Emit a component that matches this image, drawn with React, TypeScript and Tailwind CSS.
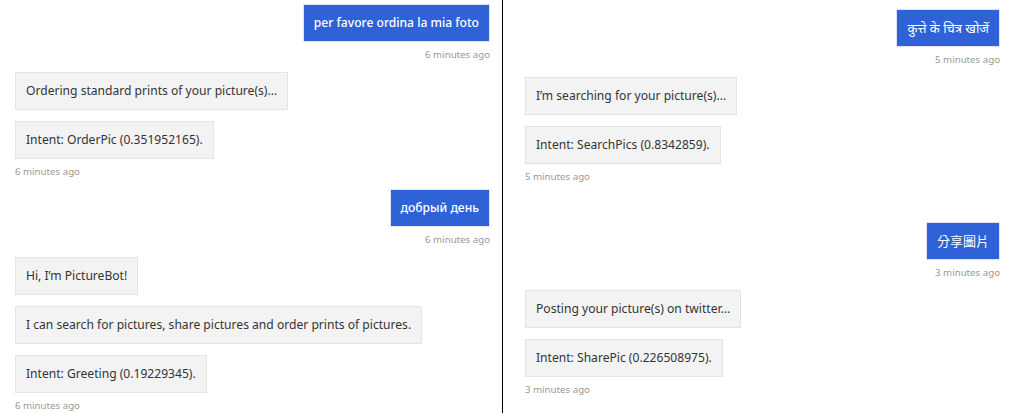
type Msg = { from: "user" | "bot"; lines: string[]; time: string; script?: "latin" | "other" };

const leftChat: Msg[] = [
    { from: "user", lines: ["per favore ordina la mia foto"], time: "6 minutes ago" },
    { from: "bot", lines: ["Ordering standard prints of your picture(s)...", "Intent: OrderPic (0.351952165)."], time: "6 minutes ago" },
    { from: "user", lines: ["добрый день"], time: "6 minutes ago" },
    {
        from: "bot",
        lines: [
            "Hi, I\u2019m PictureBot!",
            "I can search for pictures, share pictures and order prints of pictures.",
            "Intent: Greeting (0.19229345).",
        ],
        time: "6 minutes ago",
    },
];

const rightChat: Msg[] = [
    { from: "user", lines: ["कुत्ते के चित्र खोजें"], time: "5 minutes ago", script: "other" },
    { from: "bot", lines: ["I\u2019m searching for your picture(s)...", "Intent: SearchPics (0.8342859)."], time: "5 minutes ago" },
    { from: "user", lines: ["分享圖片"], time: "3 minutes ago", script: "other" },
    { from: "bot", lines: ["Posting your picture(s) on twitter...", "Intent: SharePic (0.226508975)."], time: "3 minutes ago" },
];

function Group({ msg, className = "" }: { msg: Msg; className?: string }) {
    const isUser = msg.from === "user";
    // non-latin user text falls back to a regular-weight font in the original
    const userText = msg.script === "other" ? "font-normal text-[13px]" : "font-medium";
    return (
        <div className={`flex flex-col ${isUser ? "items-end" : "items-start"} ${className}`}>
            {msg.lines.map((line, i) => (
                <div
                    key={i}
                    className={`h-[38px] px-[10px] border flex items-center whitespace-nowrap leading-5 ${i > 0 ? "mt-[11px]" : ""} ${
                        isUser
                            ? `bg-[#2f62d6] border-[#dce4f5] text-white ${userText}`
                            : "bg-[#f3f3f3] border-[#e4e4e4] text-[#333333]"
                    }`}
                >
                    {line}
                </div>
            ))}
            <div className="mt-[6px] h-[14px] leading-[14px] text-[9.7px] text-[#999999]">{msg.time}</div>
        </div>
    );
}

export default function App() {
    return (
        <div
            className="flex h-[413px] w-[1023px] overflow-hidden bg-white text-[12.1px]"
            style={{ fontFamily: '"Noto Sans", "Noto Sans CJK TC", sans-serif' }}
        >
            <div className="w-[502px] pl-[15px] pr-[12px] pt-[4px] flex flex-col gap-[10px]">
                {leftChat.map((m, i) => (
                    <Group key={i} msg={m} />
                ))}
            </div>
            <div className="w-px bg-black" />
            <div className="flex-1 pl-[22px] pr-[23px] pt-[9px] flex flex-col">
                <Group msg={rightChat[0]} />
                <Group msg={rightChat[1]} className="mt-[10px]" />
                <Group msg={rightChat[2]} className="mt-[38px]" />
                <Group msg={rightChat[3]} className="mt-[10px]" />
            </div>
        </div>
    );
}
